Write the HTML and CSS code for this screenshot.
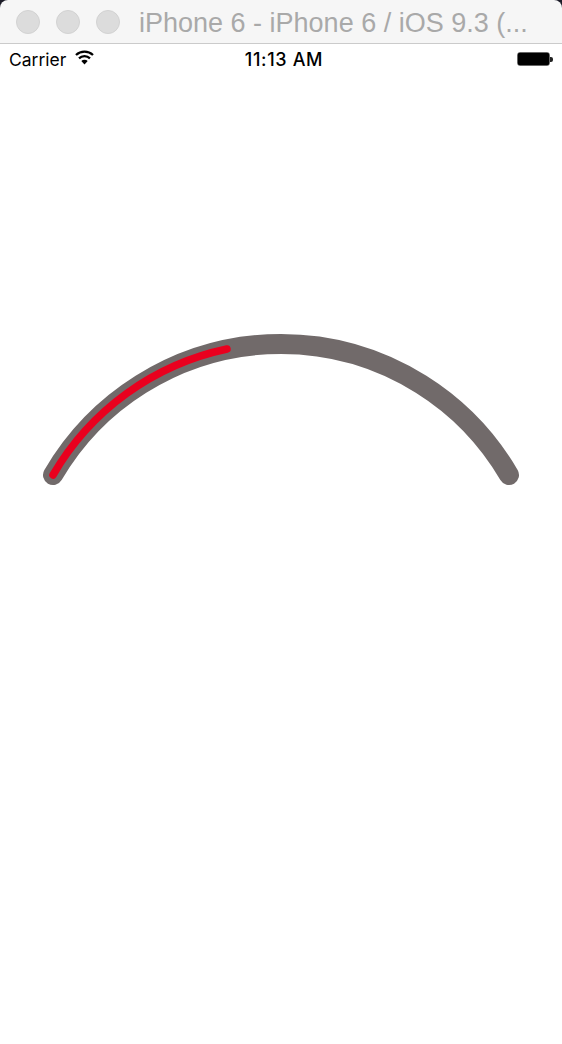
FILE: index.html
```html
<!DOCTYPE html>
<html lang="en">
<head>
  <meta charset="UTF-8">
  <meta name="viewport" content="width=device-width,initial-scale=1">
  <title>iPhone 6 - iPhone 6 / iOS 9.3</title>
  <link rel="stylesheet" href="styles.css">
</head>
<body>
  <header class="window-top">
    <div class="titlebar">
      <span class="light"></span>
      <span class="light"></span>
      <span class="light"></span>
      <span class="window-title">iPhone 6 - iPhone 6 / iOS 9.3 (...</span>
    </div>
  </header>

  <div class="statusbar">
    <div class="status-left">
      <span>Carrier</span>
      <svg class="wifi" width="19" height="15" viewBox="0 0 19 15">
        <path d="M9.5 14.5 L6.3 11 A4.6 4.6 0 0 1 12.7 11 Z" fill="#000"/>
        <path d="M4 8.3 A8 8 0 0 1 15 8.3" fill="none" stroke="#000" stroke-width="2.3"/>
        <path d="M1 5 A12.4 12.4 0 0 1 18 5" fill="none" stroke="#000" stroke-width="2.3"/>
      </svg>
    </div>
    <div class="status-time">11:13 AM</div>
    <div class="status-right">
      <div class="battery"><div class="battery-fill"></div></div>
      <div class="battery-tip"></div>
    </div>
  </div>

  <main class="stage">
    <svg class="gauge" width="562" height="968" viewBox="0 76 562 968">
      <path class="gauge-track" d="M53 475 A263.9 263.9 0 0 1 509 475"/>
      <path class="gauge-value" d="M53 475 A263.9 263.9 0 0 1 227 349"/>
    </svg>
  </main>
</body>
</html>
```

FILE: styles.css
```css
* { box-sizing: border-box; }
html, body { margin: 0; padding: 0; }
body { width: 562px; height: 1044px; overflow: hidden; background: #fff; font-family: Inter, "Liberation Sans", sans-serif; color: #000; }

.window-top { background: #1c1c28; }
.titlebar { display: flex; align-items: center; height: 44px; padding-left: 16px; gap: 16px; background: #f6f6f6; border-bottom: 1px solid #cbcbcb; border-radius: 8px 8px 0 0; }
.light { flex: none; width: 24px; height: 24px; border-radius: 50%; background: #dcdcdc; border: 1px solid #d2d2d2; }
.window-title { margin-left: 3px; padding-top: 3px; font-family: "Liberation Sans", sans-serif; font-size: 27px; color: #a9a9a9; white-space: nowrap; }

.statusbar { display: grid; grid-template-columns: 1fr auto 1fr; align-items: center; height: 32px; padding: 0 9px 2px; font-size: 17.5px; }
.status-left { display: flex; align-items: center; gap: 9px; }
.wifi { display: block; margin-top: -3px; }
.status-time { margin-left: 6px; font-size: 18px; font-weight: 500; letter-spacing: 0.65px; }
.status-right { display: flex; align-items: center; justify-content: flex-end; }
.battery { width: 33px; height: 14px; border: 1px solid #666; border-radius: 3px; }
.battery-fill { height: 100%; background: #000; border-radius: 1px; }
.battery-tip { width: 3px; height: 5px; background: #222; border-radius: 0 2px 2px 0; }

.gauge { display: block; }
.gauge-track { fill: none; stroke: #716a6a; stroke-width: 20; stroke-linecap: round; }
.gauge-value { fill: none; stroke: #e9001e; stroke-width: 7.5; stroke-linecap: round; }
```
